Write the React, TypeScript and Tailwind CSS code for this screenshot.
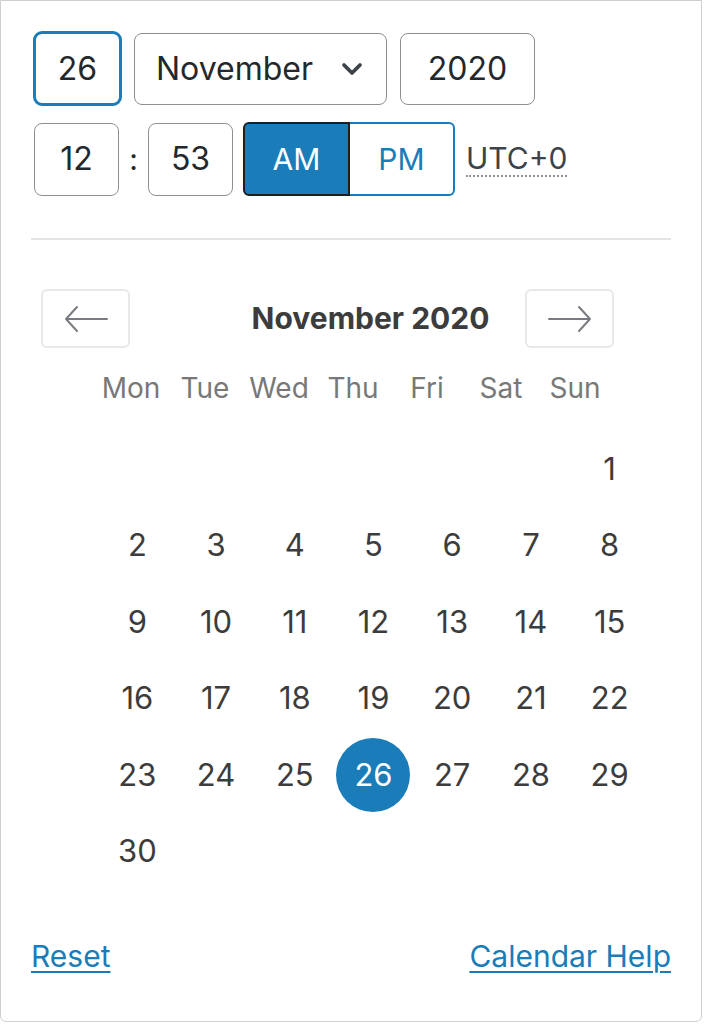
import { ChevronDown } from "lucide-react";

const weekdays = ["Mon", "Tue", "Wed", "Thu", "Fri", "Sat", "Sun"];

// November 2020 starts on a Sunday, so six blank cells come first
const cells: (number | null)[] = [
  ...Array.from({ length: 6 }, () => null),
  ...Array.from({ length: 30 }, (_, i) => i + 1),
];

function Arrow({ dir }: { dir: "left" | "right" }) {
  return (
    <svg width="46" height="28" viewBox="0 0 46 28" fill="none" stroke="#787c82" strokeWidth="2" strokeLinecap="round" strokeLinejoin="round">
      {dir === "left" ? (
        <path d="M44 14H3M14 2L3 14l11 12" />
      ) : (
        <path d="M2 14h41M32 2l11 12-11 12" />
      )}
    </svg>
  );
}

export default function App() {
  const selected = 26;

  return (
    <div className="h-[1024px] w-[704px] bg-white font-['Inter','Liberation_Sans',sans-serif] text-[#23282d]">
      <div className="flex h-[1022px] w-[702px] flex-col rounded-b-[6px] border border-[#cfcfcf] px-[30px] pt-[30px]">
        {/* date row */}
        <div className="flex items-center gap-3 pl-[2px]">
          <div className="flex h-[75px] w-[89px] items-center justify-center rounded-[9px] border-[3px] border-[#1a7cb8] text-[32px]">
            26
          </div>
          <div className="flex h-[72px] w-[253px] items-center justify-between rounded-[8px] border border-[#8c8f94] pl-[21px] pr-[18px] text-[32px]">
            <span>November</span>
            <ChevronDown size={32} strokeWidth={2.8} className="text-[#3c434a]" />
          </div>
          <div className="ml-px flex h-[72px] w-[135px] items-center justify-center rounded-[8px] border border-[#8c8f94] text-[32px]">
            2020
          </div>
        </div>

        {/* time row */}
        <div className="mt-[16px] flex items-center pl-[3px]">
          <div className="flex h-[73px] w-[85px] items-center justify-center rounded-[8px] border border-[#8c8f94] text-[32px]">
            12
          </div>
          <span className="w-[29px] text-center text-[30px] leading-none">:</span>
          <div className="flex h-[73px] w-[85px] items-center justify-center rounded-[8px] border border-[#8c8f94] text-[32px]">
            53
          </div>
          <div className="ml-[10px] flex h-[74px]">
            <div className="flex w-[107px] items-center justify-center rounded-l-[6px] border-2 border-[#1e1e1e] bg-[#1a7cb8] text-[30px] text-white">
              AM
            </div>
            <div className="flex w-[105px] items-center justify-center rounded-r-[6px] border-2 border-l-0 border-[#1a7cb8] bg-white text-[30px] text-[#1a7cb8]">
              PM
            </div>
          </div>
          <span className="ml-[11px] border-b-2 border-dotted border-[#8c8f94] text-[30px] leading-[34px] text-[#3c434a]">
            UTC+0
          </span>
        </div>

        <div className="mt-[42px] h-[2px] bg-[#e2e4e7]" />

        {/* calendar */}
        <div className="mt-[49px]">
          <div className="flex h-[59px] items-center pl-[10px]">
            <div className="flex h-[59px] w-[89px] items-center justify-center rounded-[6px] border-2 border-[#e8e8e8]">
              <Arrow dir="left" />
            </div>
            <div className="flex-1 pl-[86px] text-center text-[30px] font-bold text-[#3c3c3c]">
              November 2020
            </div>
            <div className="mr-[57px] flex h-[59px] w-[89px] items-center justify-center rounded-[6px] border-2 border-[#e8e8e8]">
              <Arrow dir="right" />
            </div>
          </div>

          <div className="ml-[63px] mt-[19px] grid h-[40px] w-[518px] grid-cols-7 items-center text-center text-[28px] text-[#787878]">
            {weekdays.map((d) => (
              <span key={d}>{d}</span>
            ))}
          </div>

          <div className="ml-[67px] mt-[24px] grid w-[551px] grid-cols-7 auto-rows-[76.4px] text-[31px] text-[#3c3c3c]">
            {cells.map((n, i) =>
              n === null ? (
                <span key={`b${i}`} />
              ) : (
                <div key={n} className="flex items-center justify-center">
                  {n === selected ? (
                    <span className="flex h-[74px] w-[74px] items-center justify-center rounded-full bg-[#1a7cb8] text-white">
                      {n}
                    </span>
                  ) : (
                    <span>{n}</span>
                  )}
                </div>
              )
            )}
          </div>
        </div>

        {/* footer */}
        <div className="mt-[45px] flex items-center justify-between text-[30px] text-[#1a7cb8]">
          <a className="underline decoration-2 underline-offset-[4px]">Reset</a>
          <a className="underline decoration-2 underline-offset-[4px]">Calendar Help</a>
        </div>
      </div>
    </div>
  );
}
